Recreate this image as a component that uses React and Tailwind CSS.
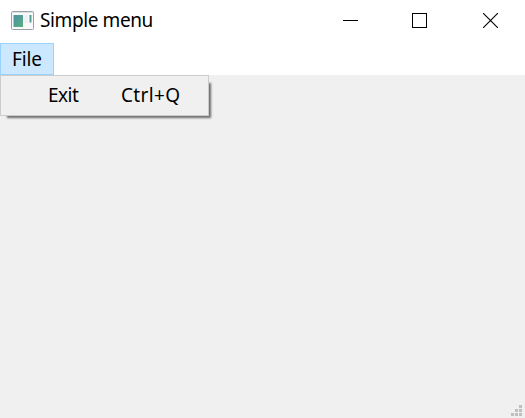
function AppIcon() {
  return (
    <svg width="23" height="19" viewBox="0 0 23 19" className="shrink-0">
      <defs>
        <linearGradient id="pane" x1="0" y1="0" x2="1" y2="1">
          <stop offset="0" stopColor="#4c8fa5" />
          <stop offset="1" stopColor="#58b080" />
        </linearGradient>
      </defs>
      <rect x="0.5" y="0.5" width="22" height="18" rx="1" fill="#fafafa" stroke="#9a9fa6" />
      <path d="M1 1.5h21" stroke="#dcdfe3" />
      <rect x="2.5" y="4" width="9.5" height="12" fill="url(#pane)" />
      <rect x="13" y="4" width="4" height="8" fill="#eef0f5" />
      <rect x="18.5" y="4" width="2" height="7.5" fill="url(#pane)" />
    </svg>
  );
}

function TitleBar() {
  return (
    <header className="flex h-[43px] items-start bg-white pl-[11px]">
      <div className="flex h-10 flex-1 items-center gap-[6px]">
        <AppIcon />
        <h1 className="text-[19px] leading-10 tracking-[-0.4px] whitespace-nowrap">Simple menu</h1>
      </div>
      <div className="flex h-10 items-center pr-[27px] text-black">
        <svg width="15" height="15" viewBox="0 0 15 15" shapeRendering="crispEdges">
          <path d="M0 7.5h15" stroke="currentColor" />
        </svg>
        <svg width="15" height="15" viewBox="0 0 15 15" className="ml-[54px]" shapeRendering="crispEdges">
          <rect x="0.5" y="0.5" width="14" height="14" fill="none" stroke="currentColor" />
        </svg>
        <svg width="15" height="15" viewBox="0 0 15 15" className="ml-[56px]">
          <path d="M0 0l15 15M15 0L0 15" stroke="currentColor" strokeWidth="1.1" />
        </svg>
      </div>
    </header>
  );
}

function FileMenu() {
  return (
    <div className="absolute top-full left-0 h-[41px] w-[209px]">
      <div className="absolute top-[6px] right-0 bottom-0 left-[5px] shadow-[2px_2px_2px_rgba(0,0,0,0.55)]" />
      <div className="relative flex h-full items-center border border-[#cccccc] bg-[#f0f0f0] pl-[47px]">
        <span className="w-[73px] tracking-[-0.5px]">Exit</span>
        <span className="tracking-[0.35px]">Ctrl+Q</span>
      </div>
    </div>
  );
}

function SizeGrip() {
  return (
    <svg width="11" height="11" viewBox="0 0 11 11" fill="#bfbfbf">
      <path d="M8 0h3v3h-3zM4 4h3v3h-3zM8 4h3v3h-3zM0 8h3v3h-3zM4 8h3v3h-3zM8 8h3v3h-3z" />
    </svg>
  );
}

export default function App() {
  return (
    <div className="flex h-[418px] w-[525px] flex-col overflow-hidden bg-[#f0f0f0] font-['Noto_Sans','Open_Sans',sans-serif] text-[19px] text-black">
      <TitleBar />
      <nav className="flex h-8 bg-white">
        <div className="relative w-[54px]">
          <button className="flex h-8 w-full items-center border border-[#99d1ff] bg-[#cce8ff] pl-[11px] tracking-[-0.1px]">File</button>
          <FileMenu />
        </div>
      </nav>
      <main className="flex flex-1 items-end justify-end pr-[3px] pb-[2px]">
        <SizeGrip />
      </main>
    </div>
  );
}
